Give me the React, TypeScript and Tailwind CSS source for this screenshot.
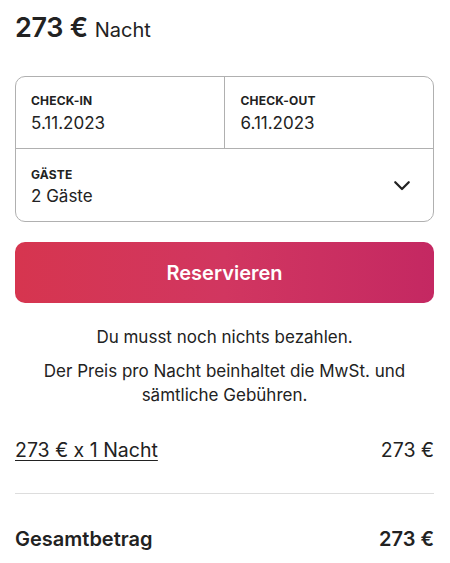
import React from "react";

export default function App() {
  return (
    <div
      className="w-[450px] h-[563px] bg-white text-[#222222] overflow-hidden pl-[15px] pr-[16px]"
      style={{ fontFamily: "Inter, 'Noto Sans', sans-serif" }}
    >
      <div className="pt-[12px] flex items-baseline gap-[7px] h-[76px]">
        <span className="text-[27px] font-semibold leading-[32px] tracking-[-0.3px]">273 €</span>
        <span className="text-[20px] leading-[32px]">Nacht</span>
      </div>

      <div className="border border-[#b0b0b0] rounded-[10px]">
        <div className="flex h-[72px] border-b border-[#b0b0b0]">
          <div className="flex-1 border-r border-[#b0b0b0] pl-[15px] pt-[15px]">
            <div className="text-[12px] font-bold leading-[17px] tracking-[0.2px]">CHECK-IN</div>
            <div className="text-[17px] leading-[22px] mt-[3px]">5.11.2023</div>
          </div>
          <div className="flex-1 pl-[16px] pt-[15px]">
            <div className="text-[12px] font-bold leading-[17px] tracking-[0.2px]">CHECK-OUT</div>
            <div className="text-[17px] leading-[22px] mt-[3px]">6.11.2023</div>
          </div>
        </div>
        <div className="flex h-[72px] items-center pl-[15px] pr-[22px]">
          <div className="flex-1 pt-[2px]">
            <div className="text-[12px] font-bold leading-[17px] tracking-[0.2px]">GÄSTE</div>
            <div className="text-[17px] leading-[22px] mt-[2px]">2 Gäste</div>
          </div>
          <svg width="18" height="18" viewBox="0 0 32 32" fill="none" stroke="#222222" strokeWidth="4" strokeLinecap="round" strokeLinejoin="round">
            <path d="M4 11l12 12 12-12" />
          </svg>
        </div>
      </div>

      <button className="mt-[20px] w-full h-[61px] rounded-[10px] bg-gradient-to-r from-[#d6354f] via-[#d13660] to-[#c42862] text-white text-[20px] font-semibold flex items-center justify-center">
        Reservieren
      </button>

      <div className="mt-[22px] text-center text-[17px] leading-[24px] text-[#222222]">
        <p>Du musst noch nichts bezahlen.</p>
        <p className="mt-[10px] px-[14px]">Der Preis pro Nacht beinhaltet die MwSt. und sämtliche Gebühren.</p>
      </div>

      <div className="mt-[30px] flex justify-between text-[19.5px] leading-[26px]">
        <span className="underline underline-offset-[3px] decoration-1">273 € x 1 Nacht</span>
        <span>273 €</span>
      </div>

      <div className="mt-[30px] border-t border-[#dddddd]" />

      <div className="mt-[32px] flex justify-between text-[20px] leading-[26px] font-semibold">
        <span>Gesamtbetrag</span>
        <span>273 €</span>
      </div>
    </div>
  );
}
